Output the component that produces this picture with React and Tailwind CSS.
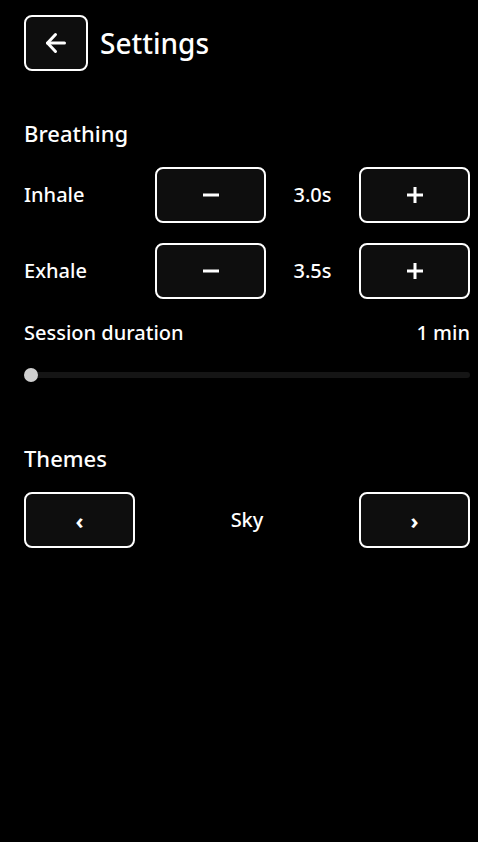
import React from "react";

function Btn({ children, className = "" }) {
  return (
    <button
      className={
        "h-14 w-[111px] rounded-lg border-2 border-white bg-[#0e0e0e] flex items-center justify-center text-white " +
        className
      }
    >
      {children}
    </button>
  );
}

const Minus = () => (
  <svg width="16" height="16" viewBox="0 0 16 16">
    <rect x="0" y="6.5" width="16" height="3" fill="white" />
  </svg>
);
const Plus = () => (
  <svg width="16" height="16" viewBox="0 0 16 16">
    <rect x="0" y="6.5" width="16" height="3" fill="white" />
    <rect x="6.5" y="0" width="3" height="16" fill="white" />
  </svg>
);

export default function App() {
  return (
    <div
      className="min-h-[842px] w-[478px] bg-black text-white pl-6 pr-2"
      style={{ fontFamily: '"Noto Sans", "Open Sans", sans-serif' }}
    >
      <div className="flex items-center pt-[15px] gap-3">
        <button className="h-14 w-16 rounded-lg border-2 border-white bg-[#0e0e0e] flex items-center justify-center">
          <svg width="22" height="22" viewBox="0 0 22 22" fill="none" stroke="white" strokeWidth="3" strokeLinecap="round" strokeLinejoin="round">
            <path d="M19.5 11H2.5" />
            <path d="M10.5 2.5L2.5 11l8 8.5" />
          </svg>
        </button>
        <h1 className="text-[28px] font-medium leading-none">Settings</h1>
      </div>

      <h2 className="mt-[48px] text-[22px] font-medium leading-[28px]">Breathing</h2>

      <div className="mt-[20px] flex items-center">
        <span className="w-[131px] text-[20px] font-medium">Inhale</span>
        <Btn><Minus /></Btn>
        <span className="w-[93px] text-center text-[20px] font-medium">3.0s</span>
        <Btn><Plus /></Btn>
      </div>
      <div className="mt-[20px] flex items-center">
        <span className="w-[131px] text-[20px] font-medium">Exhale</span>
        <Btn><Minus /></Btn>
        <span className="w-[93px] text-center text-[20px] font-medium">3.5s</span>
        <Btn><Plus /></Btn>
      </div>

      <div className="mt-[20px] flex items-center justify-between text-[20px] font-medium leading-[28px]">
        <span>Session duration</span>
        <span>1 min</span>
      </div>

      <div className="relative mt-[21px] h-[14px] flex items-center">
        <div className="h-[6px] w-full rounded-full bg-[#151515]" />
        <div className="absolute left-0 top-0 h-[14px] w-[14px] rounded-full bg-[#cfcfcf]" />
      </div>

      <h2 className="mt-[62px] text-[22px] font-medium leading-[28px]">Themes</h2>

      <div className="mt-[20px] flex items-center">
        <Btn>
          <span className="text-[22px] font-bold leading-none">‹</span>
        </Btn>
        <span className="flex-1 text-center text-[20px] font-medium">Sky</span>
        <Btn>
          <span className="text-[22px] font-bold leading-none">›</span>
        </Btn>
      </div>
    </div>
  );
}
